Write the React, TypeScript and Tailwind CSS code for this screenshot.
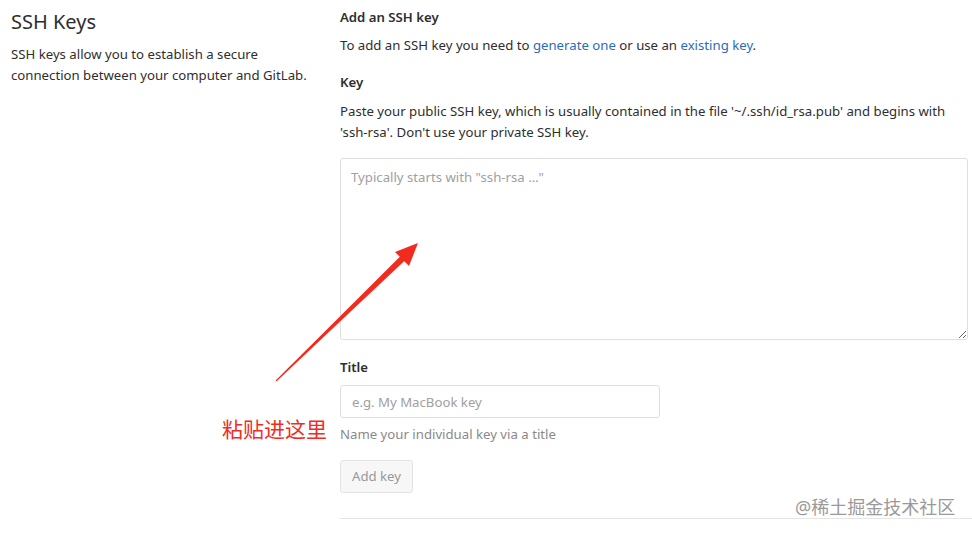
import React from "react";

const font = { fontFamily: '"Noto Sans", "Open Sans", "Noto Sans CJK SC", sans-serif' };

const App: React.FC = () => (
  <div className="relative w-[972px] h-[535px] overflow-hidden bg-white text-[#2e2e2e]" style={font}>
    <div className="flex">
      {/* Left column */}
      <div className="w-[340px] shrink-0 pl-[11px]">
        <h3 className="text-[20px] leading-[26px] mt-[9px] text-[#2e2e2e]">SSH Keys</h3>
        <p className="text-[13.2px] leading-[21px] mt-[9px] text-[#2e2e2e]">
          SSH keys allow you to establish a secure
          <br />
          connection between your computer and GitLab.
        </p>
      </div>

      {/* Right column */}
      <div className="flex-1 pr-[4px]">
        <h4 className="text-[13.2px] leading-[20px] font-semibold mt-[7px]">Add an SSH key</h4>
        <p className="text-[13.2px] leading-[21px] mt-[8px]">
          To add an SSH key you need to{" "}
          <a className="text-[#2a6db8]">generate one</a> or use an{" "}
          <a className="text-[#2a6db8]">existing key</a>.
        </p>

        <label className="block text-[13.2px] leading-[20px] font-semibold mt-[16px]">Key</label>
        <p className="text-[13.2px] leading-[21px] mt-[9px]">
          Paste your public SSH key, which is usually contained in the file '~/.ssh/id_rsa.pub' and begins with
          'ssh-rsa'. Don't use your private SSH key.
        </p>
        <textarea
          className="block w-full h-[182px] mt-[15px] border border-[#dfdfdf] rounded-[3px] px-[10px] py-[8px] text-[13.2px] leading-[20px] placeholder:text-[#a0a0a0] outline-none"
          style={font}
          placeholder={'Typically starts with "ssh-rsa …"'}
        />

        <label className="block text-[13.2px] leading-[20px] font-semibold mt-[17px]">Title</label>
        <input
          className="block w-[320px] h-[33px] mt-[8px] border border-[#dfdfdf] rounded-[3px] px-[11px] text-[13.2px] placeholder:text-[#a0a0a0] outline-none"
          style={font}
          placeholder="e.g. My MacBook key"
        />
        <p className="text-[13.2px] leading-[20px] mt-[6px] text-[#8a8a8a]">Name your individual key via a title</p>

        <button
          className="block h-[33px] px-[11px] mt-[16px] border border-[#e3e3e3] rounded-[3px] bg-[#f7f7f7] text-[13.2px] text-[#999]"
          style={font}
        >
          Add key
        </button>

        <div className="mt-[25px] border-t border-[#e5e5e5] mr-[-4px]" />
      </div>
    </div>

    {/* Annotation arrow */}
    <svg className="absolute left-0 top-0 pointer-events-none" width="972" height="535">
      <polygon points="275.6,380.6 276.4,381.4 406.5,258.9 402.1,254.5" fill="#f22b1f" />
      <polygon points="418,243 409,266 395,252" fill="#f22b1f" />
    </svg>
    <div className="absolute left-[222px] top-[415px] text-[21px] leading-[28px] text-[#f22b1f]" style={font}>
      粘贴进这里
    </div>

    {/* Watermark */}
    <div className="absolute left-[795px] top-[495px] text-[18px] leading-[24px] text-[#9a9a9a]" style={font}>
      @稀土掘金技术社区
    </div>
  </div>
);

export default App;
